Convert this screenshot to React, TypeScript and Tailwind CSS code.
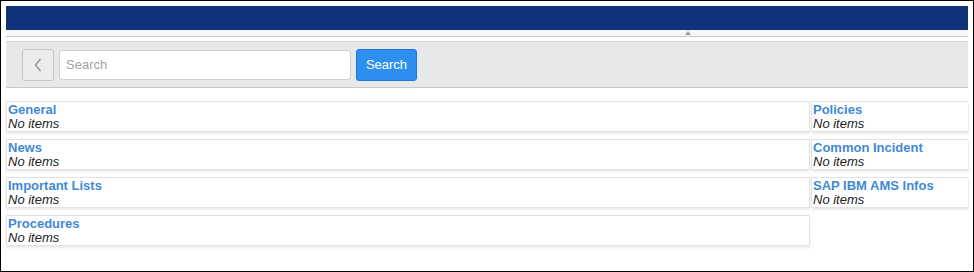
import React from "react";

const left = ["General", "News", "Important Lists", "Procedures"];
const right = ["Policies", "Common Incident", "SAP IBM AMS Infos"];

const Card = ({ title, side }: { title: string; side: "left" | "right" }) => (
  <div
    className={
      side === "left"
        ? "h-[31px] border border-[#e2e2e2] bg-white pl-[1px] shadow-[0_2px_2px_rgba(0,0,0,0.08)]"
        : "h-[31px] border-y border-l border-[#e2e2e2] bg-white pl-[1px] shadow-[1px_2px_2px_rgba(0,0,0,0.08)]"
    }
  >
    <div className="text-[13px] font-bold leading-[15px] text-[#3f89d6]">{title}</div>
    <div className="text-[13px] italic leading-[14px] text-[#222]">No items</div>
  </div>
);

const App = () => {
  return (
    <div className="w-[974px] h-[272px] border border-black bg-white px-[5px] pt-[5px] font-['Liberation_Sans',Arial,sans-serif] overflow-hidden">
      <div className="h-[24px] bg-[#10327a]" />
      <div className="relative h-[7px] bg-[#f8f8f8] border-b border-[#c9c9c9]">
        <svg className="absolute left-[679px] top-[1px]" width="6" height="4" viewBox="0 0 6 4">
          <path d="M0 4 L3 0 L6 4 Z" fill="#9a9a9a" />
        </svg>
      </div>
      <div className="h-[4px]" />
      <div className="h-[47px] bg-[#e7e8e9] border-t border-[#d6d6d6] border-b border-b-[#c8c8c8] flex items-center pl-[16px]">
        <button className="w-[32px] h-[32px] flex items-center justify-center rounded-[3px] border border-[#c6c6c6] bg-[#ececec]">
          <svg width="10" height="16" viewBox="0 0 10 16">
            <path d="M7.5 2 L2.5 8 L7.5 14" fill="none" stroke="#888" strokeWidth="1.2" />
          </svg>
        </button>
        <input
          placeholder="Search"
          className="ml-[5px] w-[292px] h-[30px] rounded-[3px] border border-[#cfcfcf] bg-white px-[6px] text-[13px] text-[#555] placeholder:text-[#a3a3a3] outline-none"
        />
        <button className="ml-[5px] w-[61px] h-[32px] rounded-[3px] border border-[#1f76d8] bg-[#2f8ff1] text-[13px] text-white">
          Search
        </button>
      </div>
      <div className="flex mt-[13px]">
        <div className="w-[804px] flex flex-col gap-[7px]">
          {left.map((t) => (
            <Card key={t} title={t} side="left" />
          ))}
        </div>
        <div className="w-[158px] flex flex-col gap-[7px] pl-[1px]">
          {right.map((t) => (
            <Card key={t} title={t} side="right" />
          ))}
        </div>
      </div>
    </div>
  );
};

export default App;
